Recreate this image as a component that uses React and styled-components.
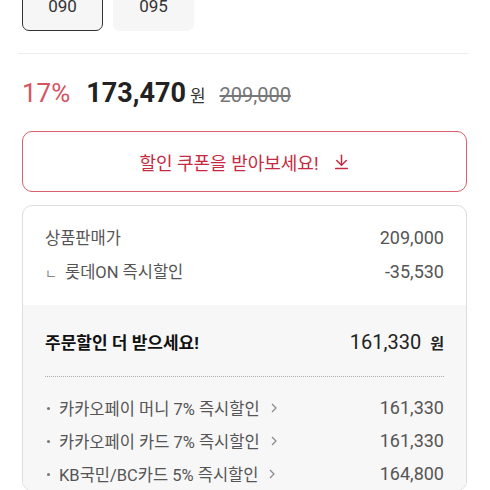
import styled, { createGlobalStyle } from "styled-components";

const GlobalStyle = createGlobalStyle`
  body {
    margin: 0;
    background: #fff;
    font-family: Roboto, "Noto Sans CJK KR", sans-serif;
  }
`;

const sizes = [
  { label: "090", selected: true },
  { label: "095", selected: false },
];

const benefits = [
  { name: "카카오페이 머니 7% 즉시할인", price: "161,330" },
  { name: "카카오페이 카드 7% 즉시할인", price: "161,330" },
  { name: "KB국민/BC카드 5% 즉시할인", price: "164,800" },
];

function DownloadIcon() {
  return (
    <svg width="17" height="17" viewBox="0 0 16 16" fill="none" stroke="currentColor" strokeWidth="1.4" strokeLinecap="round">
      <path d="M8 2v9" />
      <path d="M3.5 7l4.5 4.5L12.5 7" />
      <path d="M2.5 14.5h11" />
    </svg>
  );
}

function Chevron() {
  return (
    <svg width="8" height="12" viewBox="0 0 8 12" fill="none" stroke="#888" strokeWidth="1.2">
      <path d="M2 2l4 4-4 4" />
    </svg>
  );
}

function App() {
  return (
    <Page>
      <GlobalStyle />
      <SizeList>
        {sizes.map((s) => (
          <SizeButton key={s.label} $selected={s.selected}>
            {s.label}
          </SizeButton>
        ))}
      </SizeList>
      <Divider />
      <PriceRow>
        <Rate>17%</Rate>
        <Price>
          173,470<Won>원</Won>
        </Price>
        <OldPrice>209,000</OldPrice>
      </PriceRow>
      <CouponButton>
        할인 쿠폰을 받아보세요!
        <DownloadIcon />
      </CouponButton>
      <Card>
        <Summary>
          <Line>
            <span>상품판매가</span>
            <Num>209,000</Num>
          </Line>
          <Line>
            <span>
              <Mark>ㄴ</Mark>롯데ON 즉시할인
            </span>
            <Num>-35,530</Num>
          </Line>
        </Summary>
        <Extra>
          <ExtraHead>
            <strong>주문할인 더 받으세요!</strong>
            <Total>
              161,330<b>원</b>
            </Total>
          </ExtraHead>
          {benefits.map((b) => (
            <Benefit key={b.name}>
              <BenefitName>
                <Dot />
                {b.name}
                <Chevron />
              </BenefitName>
              <Num>{b.price}</Num>
            </Benefit>
          ))}
        </Extra>
      </Card>
    </Page>
  );
}

const Page = styled.div`
  padding: 0 23px 0 22px;
  overflow: hidden;
  height: 490px;
  box-sizing: border-box;
`;

const SizeList = styled.div`
  display: flex;
  gap: 10px;
  margin-top: -18px;
`;

const SizeButton = styled.div`
  width: 81px;
  height: 49px;
  box-sizing: border-box;
  border-radius: 7px;
  background: #f6f6f6;
  border: 1px solid ${(p) => (p.$selected ? "#333" : "#f6f6f6")};
  display: flex;
  align-items: center;
  justify-content: center;
  padding-bottom: 2px;
  font-size: 17px;
  color: #333;
`;

const Divider = styled.div`
  height: 1px;
  background: #eee;
  margin: 22px -2px 0 -4px;
`;

const PriceRow = styled.div`
  display: flex;
  align-items: baseline;
  height: 32px;
  margin-top: 23px;
`;

const Rate = styled.span`
  color: #d9535f;
  font-size: 26px;
  margin-right: 16px;
`;

const Price = styled.span`
  font-size: 27px;
  font-weight: 700;
  color: #222;
`;

const Won = styled.span`
  font-size: 17px;
  font-weight: 400;
  color: #333;
  margin-left: 4px;
`;

const OldPrice = styled.span`
  font-size: 20px;
  color: #777;
  text-decoration: line-through;
  margin-left: 14px;
`;

const CouponButton = styled.div`
  margin-top: 22px;
  height: 61px;
  box-sizing: border-box;
  border: 1px solid #d9606c;
  border-radius: 10px;
  display: flex;
  align-items: center;
  justify-content: center;
  gap: 14px;
  color: #c62a40;
  font-size: 18px;
`;

const Card = styled.div`
  margin-top: 13px;
  border: 1px solid #ddd;
  border-radius: 10px;
  overflow: hidden;
`;

const Summary = styled.div`
  padding: 14px 22px 17px;
`;

const Line = styled.div`
  display: flex;
  justify-content: space-between;
  align-items: center;
  height: 34px;
  font-size: 16.5px;
  color: #555;
`;

const Num = styled.span`
  font-size: 18px;
  color: #555;
`;

const Mark = styled.span`
  font-size: 13px;
  color: #888;
  margin-right: 8px;
`;

const Extra = styled.div`
  background: #f7f7f7;
  padding: 19px 22px 0;
`;

const ExtraHead = styled.div`
  display: flex;
  justify-content: space-between;
  align-items: center;
  height: 35px;
  padding-bottom: 17px;
  border-bottom: 1px dotted #aaa;
  margin-bottom: 14px;
  font-size: 17px;
  color: #111;
`;

const Total = styled.span`
  font-size: 20px;
  color: #222;

  b {
    font-size: 15px;
    margin-left: 9px;
  }
`;

const Benefit = styled.div`
  display: flex;
  justify-content: space-between;
  align-items: center;
  height: 33px;
  font-size: 16.5px;
  color: #555;
`;

const BenefitName = styled.span`
  display: flex;
  align-items: center;

  svg {
    margin-left: 10px;
  }
`;

const Dot = styled.span`
  width: 3px;
  height: 3px;
  border-radius: 50%;
  background: #777;
  margin: 2px 9px 0 2px;
`;

export default App;
